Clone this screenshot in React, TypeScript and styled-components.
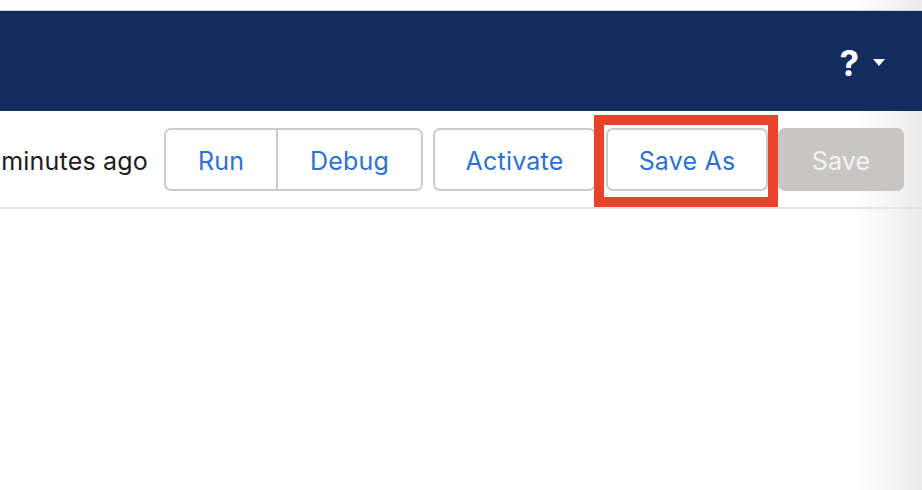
import React from 'react';
import styled, {createGlobalStyle} from 'styled-components';

const GlobalStyle = createGlobalStyle`
  *,
  *::before,
  *::after {
    margin: 0;
    padding: 0;
    box-sizing: border-box;
  }

  html, body {
    width: 100%;
    height: 100%;
  }

  body {
    font-family: Inter, "Noto Sans", sans-serif;
    background: linear-gradient(to right, #ffffff 0, #ffffff calc(100% - 66px), #ebebeb 100%);
    overflow: hidden;
  }
`;

const Page = styled.div`
  width: 100%;
  height: 100vh;
  display: flex;
  flex-direction: column;
`

const TopStrip = styled.div`
  height: 10px;
  flex-shrink: 0;
`

const Header = styled.header`
  height: 101px;
  flex-shrink: 0;
  background: #112c5d;
  border-top: 1px solid #cdd1d8;
  display: flex;
  justify-content: flex-end;
  align-items: center;
  padding-right: 37px;
  gap: 14px;
`

const HelpMark = styled.span`
  color: #ffffff;
  font-size: 35px;
  font-weight: 700;
  line-height: 1;
  margin-top: 4px;
`

const Caret = styled.span`
  width: 0;
  height: 0;
  border-left: 6px solid transparent;
  border-right: 6px solid transparent;
  border-top: 7px solid #ffffff;
  margin-top: 2px;
`

const Toolbar = styled.div`
  height: 98px;
  flex-shrink: 0;
  border-bottom: 2px solid #e4e4e4;
  display: flex;
  justify-content: flex-end;
  align-items: center;
  gap: 10px;
  padding-right: 18px;
  padding-top: 1px;
  font-size: 25px;
  letter-spacing: 0.2px;
`

const SavedText = styled.span`
  white-space: nowrap;
  color: #1c1c1c;
  margin-right: 6px;
  padding-top: 3px;
`

const Group = styled.div`
  display: flex;
  flex-shrink: 0;
  height: 63px;
  border: 2px solid #cbcbcb;
  border-radius: 7px;
  overflow: hidden;
`

const Segment = styled.button<{ $w: number; $divider?: boolean }>`
  width: ${p => p.$w}px;
  height: 100%;
  padding-top: 3px;
  background: #ffffff;
  border: none;
  border-left: ${p => (p.$divider ? '2px solid #cbcbcb' : 'none')};
  color: #2f71d1;
  font: inherit;
  letter-spacing: inherit;
`

const Button = styled.button<{ $w: number }>`
  width: ${p => p.$w}px;
  flex-shrink: 0;
  height: 63px;
  padding-top: 3px;
  background: #ffffff;
  border: 2px solid #cbcbcb;
  border-radius: 7px;
  color: #2f71d1;
  font: inherit;
  letter-spacing: inherit;
`

const PrimaryButton = styled.button<{ $w: number }>`
  width: ${p => p.$w}px;
  flex-shrink: 0;
  height: 63px;
  padding-top: 3px;
  background: #c7c6c4;
  border: none;
  border-radius: 7px;
  color: #f3f3f3;
  font: inherit;
  letter-spacing: inherit;
`

const Marked = styled.div`
  position: relative;
  display: flex;
  flex-shrink: 0;
`

const Highlight = styled.div`
  position: absolute;
  left: -12px;
  top: -13px;
  width: 184px;
  height: 92px;
  border: 10px solid #e9432a;
  pointer-events: none;
`

const Body = styled.main`
  flex: 1;
`

export default function App() {
    return (
        <Page>
            <GlobalStyle/>
            <TopStrip/>
            <Header>
                <HelpMark>?</HelpMark>
                <Caret/>
            </Header>
            <Toolbar>
                <SavedText>minutes ago</SavedText>
                <Group>
                    <Segment $w={110}>Run</Segment>
                    <Segment $w={145} $divider>Debug</Segment>
                </Group>
                <Button $w={163}>Activate</Button>
                <Marked>
                    <Button $w={162}>Save As</Button>
                    <Highlight/>
                </Marked>
                <PrimaryButton $w={126}>Save</PrimaryButton>
            </Toolbar>
            <Body/>
        </Page>
    );
}
